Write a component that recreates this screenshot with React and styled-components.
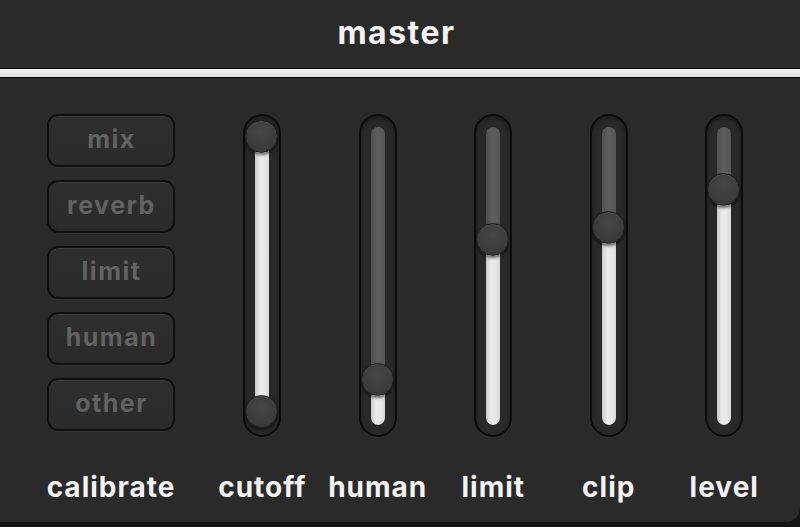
import React from "react";
import styled, { createGlobalStyle } from "styled-components";

const Global = createGlobalStyle`
  html, body { margin: 0; padding: 0; background: #141414; }
  body { width: 800px; height: 527px; overflow: hidden; }
`;

const FONT = `Inter, "Noto Sans", "Liberation Sans", sans-serif`;

const Screen = styled.div`
  width: 800px;
  height: 527px;
  background: #141414;
`;

const Panel = styled.div`
  height: 522px;
  background: #2a2a2a;
  border-bottom-right-radius: 14px;
  display: flex;
  flex-direction: column;
`;

const Header = styled.header`
  height: 68px;
  display: flex;
  align-items: center;
  justify-content: center;
  font-family: ${FONT};
  font-weight: 700;
  font-size: 32px;
  letter-spacing: 1.5px;
  color: #f2f2f2;
  padding: 0 7px 3px 0;
  box-sizing: border-box;
`;

const Divider = styled.div`
  height: 8px;
  background: linear-gradient(#f2f2f2, #e2e2e2);
  border-top: 1px solid #0b0b0b;
  border-bottom: 1px solid #0b0b0b;
`;

const Body = styled.div`
  display: flex;
  padding: 36px 0 0 47px;
`;

const Column = styled.div`
  width: ${(p) => p.$w}px;
  margin-right: ${(p) => p.$mr || 0}px;
  display: flex;
  flex-direction: column;
  align-items: center;
`;

const ButtonStack = styled.div`
  height: 323px;
  display: flex;
  flex-direction: column;
  gap: 13px;
  align-self: stretch;
`;

const PresetButton = styled.button`
  height: 53px;
  box-sizing: border-box;
  border: 2px solid #0f0f0f;
  border-radius: 11px;
  background: linear-gradient(#2f2f2f, #2a2a2a);
  box-shadow: inset 0 1px 0 rgba(255,255,255,0.06), 0 1px 0 rgba(255,255,255,0.04);
  font-family: ${FONT};
  font-weight: 700;
  font-size: 25px;
  letter-spacing: 1.5px;
  color: #626262;
  padding: 0 0 3px 1px;
  cursor: pointer;
`;

const Label = styled.div`
  margin-top: 35px;
  font-family: ${FONT};
  font-weight: 700;
  font-size: 28px;
  letter-spacing: 1px;
  line-height: 30px;
  color: #f2f2f2;
  white-space: nowrap;
`;

const Track = styled.div`
  position: relative;
  width: 38px;
  height: 323px;
  box-sizing: border-box;
  border: 2px solid #0c0c0c;
  border-radius: 19px;
  background: #292929;
  box-shadow: inset 0 2px 4px rgba(0,0,0,0.35), 0 1px 0 rgba(255,255,255,0.05);
`;

const Rail = styled.div`
  position: absolute;
  left: 10px;
  top: 11px;
  width: 14px;
  height: 298px;
  border-radius: 7px;
  background: linear-gradient(90deg, #4f4f4f, #5e5e5e 45%, #555 100%);
  overflow: hidden;
`;

const Fill = styled.div`
  position: absolute;
  left: 0;
  right: 0;
  background: linear-gradient(90deg, #d6d6d6, #ececec 40%, #e4e4e4 100%);
  box-shadow: inset 0 4px 5px rgba(0,0,0,0.12);
  border-radius: ${(p) => (p.$toEnd ? "0 0 7px 7px" : "0")};
`;

const Knob = styled.div`
  position: absolute;
  left: 0;
  width: 33px;
  height: 33px;
  margin-top: -16.5px;
  box-sizing: border-box;
  border-radius: 50%;
  border: 1px solid #1c1c1c;
  background: radial-gradient(circle at 50% 35%, #464646 0%, #3d3d3d 55%, #333 100%);
  box-shadow: 0 2px 3px rgba(0,0,0,0.55), inset 0 1px 0 rgba(255,255,255,0.08);
`;

const RAIL_TOP = 11;
const RAIL_H = 298;

function Slider({ from, to }) {
  const toEnd = to == null;
  const fillBottom = toEnd ? RAIL_TOP + RAIL_H : to;
  const knobs = toEnd ? [from] : [from, to];
  return (
    <Track>
      <Rail>
        <Fill
          $toEnd={toEnd}
          style={{ top: from - RAIL_TOP, height: fillBottom - from }}
        />
      </Rail>
      {knobs.map((k, i) => (
        <Knob key={i} style={{ top: k - 2 }} />
      ))}
    </Track>
  );
}

const sliders = [
  { name: "cutoff", from: 22, to: 297 },
  { name: "human", from: 265 },
  { name: "limit", from: 125 },
  { name: "clip", from: 113 },
  { name: "level", from: 75 },
];

const presets = ["mix", "reverb", "limit", "human", "other"];

export default function App() {
  return (
    <Screen>
      <Global />
      <Panel>
        <Header>master</Header>
        <Divider />
        <Body>
          <Column $w={128} $mr={29.5}>
            <ButtonStack>
              {presets.map((p) => (
                <PresetButton key={p}>{p}</PresetButton>
              ))}
            </ButtonStack>
            <Label>calibrate</Label>
          </Column>
          {sliders.map((s) => (
            <Column key={s.name} $w={115.5}>
              <Slider from={s.from} to={s.to} />
              <Label>{s.name}</Label>
            </Column>
          ))}
        </Body>
      </Panel>
    </Screen>
  );
}
